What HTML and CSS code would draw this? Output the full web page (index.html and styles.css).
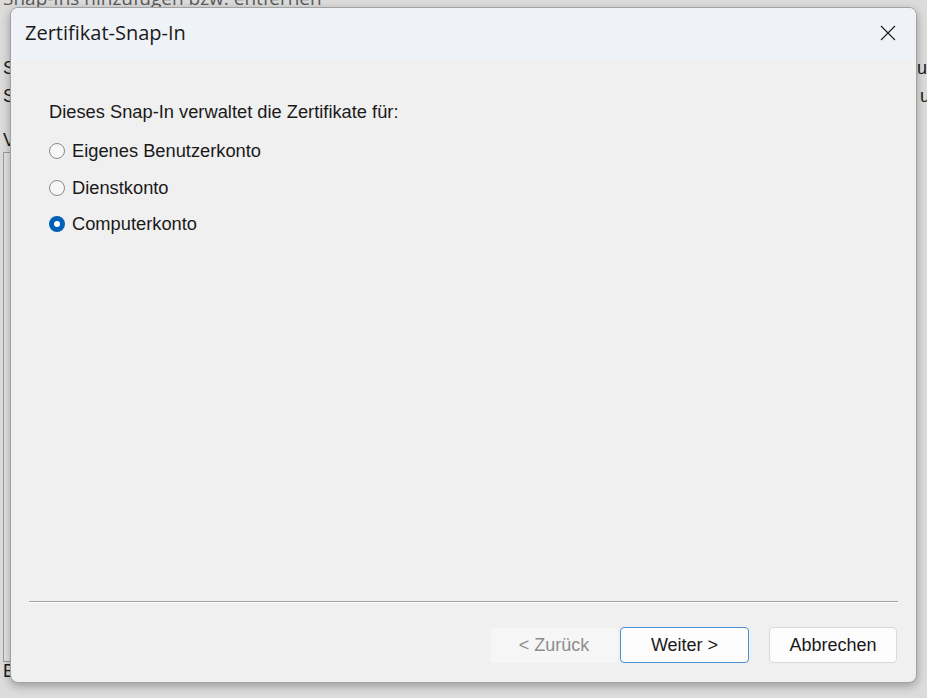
FILE: index.html
```html
<!DOCTYPE html>
<html lang="de">
<head>
    <meta charset="UTF-8">
    <meta name="viewport" content="width=device-width, initial-scale=1.0">
    <title>Zertifikat-Snap-In</title>
    <link rel="stylesheet" href="styles.css">
</head>
<body>
    <!-- parent window, mostly covered by the dialog -->
    <div class="parent">
        <div class="parent-title">Snap-Ins hinzufügen bzw. entfernen</div>
        <div class="intro-line">
            <span>Sie können für diese Konsole Snap-Ins aus den verfügbaren</span>
            <span>aus</span>
        </div>
        <div class="intro-line">
            <span>Snap-Ins können Sie konfigurieren, welche Erweiterungen</span>
            <span>ur</span>
        </div>
        <div class="parent-label">Verfügbare Snap-Ins:</div>
        <div class="snapin-list"></div>
        <div class="parent-label">Beschreibung:</div>
    </div>

    <div class="dialog">
        <div class="titlebar">
            <span class="title">Zertifikat-Snap-In</span>
            <svg class="close" width="16" height="16" viewBox="0 0 16 16">
                <path d="M1 1 L15 15 M15 1 L1 15" stroke="#1b1b1b" stroke-width="1.1" fill="none"/>
            </svg>
        </div>
        <div class="content">
            <p class="lead">Dieses Snap-In verwaltet die Zertifikate für:</p>
            <label class="option"><span class="radio"></span>Eigenes Benutzerkonto</label>
            <label class="option"><span class="radio"></span>Dienstkonto</label>
            <label class="option"><span class="radio checked"></span>Computerkonto</label>
        </div>
        <div class="separator"></div>
        <div class="buttons">
            <button class="btn disabled">&lt; Zurück</button>
            <button class="btn primary">Weiter &gt;</button>
            <button class="btn cancel">Abbrechen</button>
        </div>
    </div>
</body>
</html>
```

FILE: styles.css
```css
body {
    margin: 0;
    width: 927px;
    height: 698px;
    overflow: hidden;
    background-color: #dcdcdc;
    position: relative;
    font-family: "Liberation Sans", Arial, sans-serif;
}
.parent {
    width: 933px;
    padding-left: 3px;
    color: #1a1a1a;
    font-size: 18px;
}
.parent-title {
    margin-top: -13px;
    font-family: "Open Sans", sans-serif;
    font-size: 19px;
    line-height: 22px;
    color: #5a5a5a;
}
.intro-line {
    display: flex;
    justify-content: space-between;
    white-space: nowrap;
    line-height: 28px;
}
.parent-title + .intro-line {
    margin-top: 45px;
}
.parent-label {
    line-height: 20px;
    margin-top: 20px;
}
.snapin-list {
    margin-top: 2px;
    width: 600px;
    height: 508px;
    border: 1px solid #9c9c9c;
    background-color: #e4e4e4;
}
.snapin-list + .parent-label {
    margin-top: 0;
    line-height: 18px;
}

.dialog {
    position: absolute;
    left: 10px;
    top: 7px;
    width: 907px;
    height: 676px;
    box-sizing: border-box;
    border: 1px solid #a2a2a2;
    border-radius: 8px;
    overflow: hidden;
    background-color: #f0f0f0;
    box-shadow: 0 3px 10px rgba(0, 0, 0, 0.3);
    display: flex;
    flex-direction: column;
}
.titlebar {
    height: 52px;
    flex: none;
    display: flex;
    align-items: center;
    justify-content: space-between;
    padding: 0 20px 0 14px;
    background-color: #eff2f7;
}
.title {
    font-family: "Open Sans", sans-serif;
    font-size: 20px;
    line-height: 24px;
    margin-top: -2px;
    color: #1a1a1a;
}
.close {
    display: block;
    margin-top: -2px;
}
.content {
    flex: 1;
    padding: 39px 0 0 38px;
    font-size: 18.3px;
    color: #1a1a1a;
}
.lead {
    margin: 0 0 8px;
    line-height: 26px;
}
.option {
    display: flex;
    align-items: center;
    height: 36.5px;
}
.radio {
    width: 16px;
    height: 16px;
    box-sizing: border-box;
    border: 1px solid #8a8a8a;
    border-radius: 50%;
    background-color: #f7f7f7;
    margin-right: 7px;
}
.radio.checked {
    border: 5px solid #005fb8;
    background-color: #fff;
}
.separator {
    margin: 0 18px;
    height: 1px;
    background-color: #a0a0a0;
    border-bottom: 1px solid #fff;
}
.buttons {
    display: flex;
    justify-content: flex-end;
    padding: 24px 19px 19px 0;
}
.btn {
    width: 128px;
    height: 36px;
    box-sizing: border-box;
    font-family: "Liberation Sans", Arial, sans-serif;
    font-size: 18px;
    color: #1a1a1a;
    background-color: #fdfdfd;
    border: 1px solid #d8d8d8;
    border-radius: 4px;
}
.btn.disabled {
    background-color: #f6f6f6;
    border-color: #f3f3f3;
    color: #8d8d8d;
}
.btn.primary {
    width: 129px;
    margin-left: 2px;
    border-color: #4e90d6;
}
.btn.cancel {
    margin-left: 20px;
}
```
